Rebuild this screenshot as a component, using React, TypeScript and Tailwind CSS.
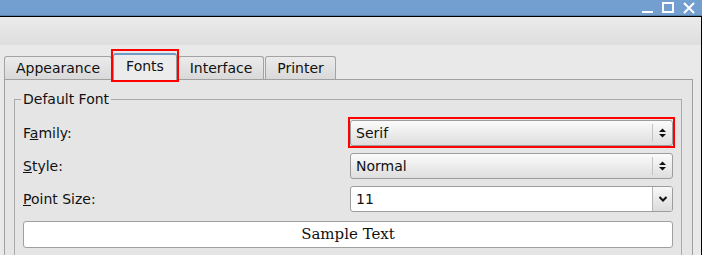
import React from 'react';

const sans = { fontFamily: '"DejaVu Sans", sans-serif' };

const UpDown = () => (
  <svg width="9" height="12" viewBox="0 0 9 12" className="text-[#111]">
    <path d="M1 5 L4.5 1.5 L8 5 Z" fill="currentColor" />
    <path d="M1 7 L4.5 10.5 L8 7 Z" fill="currentColor" />
  </svg>
);

const Chevron = () => (
  <svg width="10" height="8" viewBox="0 0 10 8">
    <path d="M1.5 2 L5 5.5 L8.5 2" fill="none" stroke="#111" strokeWidth="2" />
  </svg>
);

// red annotation box drawn over a widget
const Mark = ({ className }: { className: string }) => (
  <div className={`absolute pointer-events-none border-2 border-[#ff0000] ${className}`} />
);

const Combo = ({ value, outlined }: { value: string; outlined?: boolean }) => (
  <div className="relative">
    <div className="w-[323px] h-[26px] flex items-center rounded-[3px] border border-[#9d9d9d] bg-gradient-to-b from-[#fbfbfb] to-[#dedede]">
      <span className="flex-1 pl-[5px] text-[14px] text-[#111]">{value}</span>
      <div className="w-px h-[18px] bg-[#c4c4c4]" />
      <div className="w-[19px] flex justify-center">
        <UpDown />
      </div>
    </div>
    {outlined && <Mark className="-top-[3px] -bottom-[2px] -left-[2px] -right-[2px]" />}
  </div>
);

const EditCombo = ({ value }: { value: string }) => (
  <div className="w-[323px] h-[26px] flex items-center rounded-[3px] border border-[#9d9d9d] bg-white overflow-hidden">
    <span className="flex-1 pl-[5px] text-[14px] text-[#111]">{value}</span>
    <div className="w-[20px] h-full flex items-center justify-center border-l border-[#b4b4b4] bg-gradient-to-b from-[#f8f8f8] to-[#dcdcdc]">
      <Chevron />
    </div>
  </div>
);

const Tab = ({ label, w, active }: { label: string; w: string; active?: boolean }) =>
  active ? (
    <div className={`${w} h-[27px] relative top-px z-10`}>
      <div className="h-full flex items-center justify-center rounded-t-[3px] border border-b-0 border-[#9d9d9d] border-t-2 border-t-[#6f99c6] bg-[#ececec] text-[14px] text-[#111]">
        <span className="-mt-[2px]">{label}</span>
      </div>
      <Mark className="-top-[4px] -bottom-[2px] -left-[2px] -right-[2px]" />
    </div>
  ) : (
    <div
      className={`${w} h-[23px] flex items-center justify-center rounded-t-[3px] border border-b-0 border-[#a3a3a3] bg-gradient-to-b from-[#ebebeb] to-[#d9d9d9] text-[14px] text-[#111]`}
    >
      {label}
    </div>
  );

export default function App() {
  return (
    <div className="w-[702px] h-[255px] overflow-hidden bg-[#e9e9e9]" style={sans}>
      {/* title bar */}
      <div className="h-[16px] bg-[#729fcf] border-b border-[#5b83ad] flex items-center justify-end pr-[7px] gap-[9px]">
        <div className="w-[11px] h-[11px] flex items-end">
          <div className="w-[11px] h-[2px] bg-white" />
        </div>
        <div className="w-[12px] h-[11px] border-[2px] border-white" />
        <svg width="12" height="12" viewBox="0 0 12 12">
          <path d="M1 1 L11 11 M11 1 L1 11" stroke="white" strokeWidth="2" />
        </svg>
      </div>
      <div className="h-px bg-black" />

      <div className="border-r border-black h-[238px]">
        {/* toolbar strip */}
        <div className="h-[28px] bg-gradient-to-b from-[#ebebeb] to-[#dedede]" />

        <div className="pl-[4px] pr-[8px]">
          {/* tabs */}
          <div className="h-[34px] flex items-end">
            <Tab label="Appearance" w="w-[108px]" />
            <div className="ml-[1px]">
              <Tab label="Fonts" w="w-[64px]" active />
            </div>
            <div className="ml-[1px]">
              <Tab label="Interface" w="w-[86px]" />
            </div>
            <div className="ml-px">
              <Tab label="Printer" w="w-[71px]" />
            </div>
          </div>

          {/* pane */}
          <div className="h-[200px] border border-[#a0a0a0] bg-[#e5e5e5] pt-[19px] pl-[9px] pr-[10px]">
            <div className="relative border border-[#a9a9a9] h-[180px] pt-[20px] pl-[8px] pr-[8px]">
              <span className="absolute -top-[9px] left-[6px] px-[2px] bg-[#e5e5e5] text-[14px] leading-[16px] text-[#111]">
                Default Font
              </span>

              <div className="flex flex-col gap-[7px]">
                <div className="flex items-center justify-between">
                  <span className="text-[14px] text-[#111]">
                    F<u>a</u>mily:
                  </span>
                  <Combo value="Serif" outlined />
                </div>
                <div className="flex items-center justify-between">
                  <span className="text-[14px] text-[#111]">
                    <u>S</u>tyle:
                  </span>
                  <Combo value="Normal" />
                </div>
                <div className="flex items-center justify-between">
                  <span className="text-[14px] text-[#111]">
                    <u>P</u>oint Size:
                  </span>
                  <EditCombo value="11" />
                </div>
                <div
                  className="mt-[2px] h-[27px] rounded-[3px] border border-[#a0a0a0] bg-white flex items-center justify-center text-[15px] text-[#111]"
                  style={{ fontFamily: '"DejaVu Serif", serif' }}
                >
                  Sample Text
                </div>
              </div>
            </div>
          </div>
        </div>
      </div>
    </div>
  );
}
